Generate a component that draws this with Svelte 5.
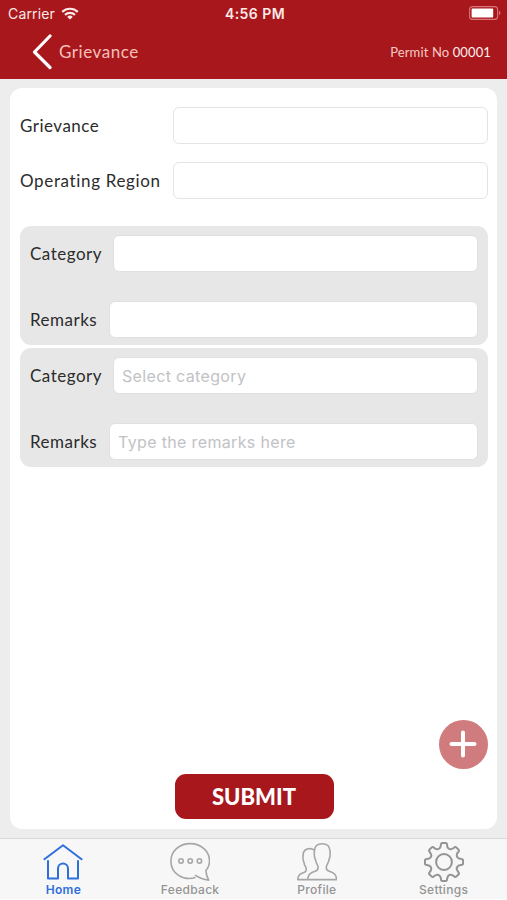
<!--
  Grievance entry screen: permit header, the two top-level fields, a list of
  category/remark groups and the tab bar.
-->
<script lang="ts">
  interface Entry {
    category: string
    remarks: string
    categoryHint: string
    remarksHint: string
  }

  const permitNo = '00001'

  let grievance = $state('')
  let region = $state('')
  let activeTab = $state('home')
  let entries = $state<Entry[]>([
    { category: '', remarks: '', categoryHint: '', remarksHint: '' },
    {
      category: '',
      remarks: '',
      categoryHint: 'Select category',
      remarksHint: 'Type the remarks here',
    },
  ])

  const tabs = [
    { id: 'home', label: 'Home' },
    { id: 'feedback', label: 'Feedback' },
    { id: 'profile', label: 'Profile' },
    { id: 'settings', label: 'Settings' },
  ]

  function addEntry() {
    entries.push({
      category: '',
      remarks: '',
      categoryHint: 'Select category',
      remarksHint: 'Type the remarks here',
    })
  }

  // Eight-tooth cog outline around (20, 20)
  function cogPath() {
    const at = (radius: number, degrees: number) => {
      const a = (degrees * Math.PI) / 180
      return `${(20 + radius * Math.cos(a)).toFixed(2)} ${(20 + radius * Math.sin(a)).toFixed(2)}`
    }
    let d = ''
    for (let i = 0; i < 8; i++) {
      const c = i * 45 - 90
      d += `${i ? 'L' : 'M'}${at(17.4, c - 10)}Q${at(19.3, c - 9)} ${at(19.1, c - 4)}`
      d += `L${at(19.1, c + 4)}Q${at(19.3, c + 9)} ${at(17.4, c + 10)}`
      d += `C${at(14.4, c + 12)} ${at(12.9, c + 26)} ${at(15.6, c + 32)}`
    }
    return d + 'Z'
  }
</script>

<div class="screen">
  <header>
    <div class="status">
      <div class="carrier">
        <span>Carrier</span>
        <svg width="18" height="13" viewBox="0 0 18 13" fill="none" stroke="currentColor" stroke-width="2.2">
          <path d="M1.2 4.9a11.2 11.2 0 0 1 15.6 0" />
          <path d="M4 7.9a7.2 7.2 0 0 1 10 0" />
          <path d="M9 12.6 6.2 9.9a4.1 4.1 0 0 1 5.6 0z" fill="currentColor" stroke="none" />
        </svg>
      </div>
      <span class="time">4:56 PM</span>
      <svg class="battery" width="32" height="14" viewBox="0 0 32 14">
        <rect x=".6" y=".6" width="28" height="12.8" rx="3" fill="none" stroke="#d9747a" stroke-width="1.1" />
        <rect x="2.6" y="2.5" width="21.6" height="9" rx="1" fill="#fff" />
        <path d="M30 4.800a2.400 2.400 0 0 1 0 4.400z" fill="#d9747a" />
      </svg>
    </div>
    <div class="nav">
      <button class="back" type="button">
        <svg width="20" height="36" viewBox="0 0 20 36" fill="none" stroke="#fff" stroke-width="3.2" stroke-linecap="round" stroke-linejoin="round">
          <path d="M18 2 2.5 18 18 33.5" />
        </svg>
        <span>Grievance</span>
      </button>
      <span class="permit">Permit No <b>{permitNo}</b></span>
    </div>
  </header>

  <main>
    <form class="card" onsubmit={(event) => event.preventDefault()}>
      <label class="row">
        <span class="label grievance">Grievance</span>
        <input bind:value={grievance} />
      </label>
      <label class="row">
        <span class="label region">Operating Region</span>
        <input bind:value={region} />
      </label>

      <div class="entries">
        {#each entries as entry}
          <div class="entry">
            <label>
              <span class="label category">Category</span>
              <input placeholder={entry.categoryHint} bind:value={entry.category} />
            </label>
            <label>
              <span class="label remarks">Remarks</span>
              <input placeholder={entry.remarksHint} bind:value={entry.remarks} />
            </label>
          </div>
        {/each}
      </div>

      <button class="add" type="button" aria-label="Add" onclick={addEntry}>
        <svg width="29" height="29" viewBox="0 0 29 29" stroke="#fff" stroke-width="4" stroke-linecap="round">
          <path d="M14 2.500v23M2.500 14h23" />
        </svg>
      </button>
      <button class="submit" type="submit">SUBMIT</button>
    </form>
  </main>

  <nav class="tabs">
    {#each tabs as tab}
      <button
        class="tab {tab.id}"
        class:active={activeTab === tab.id}
        type="button"
        onclick={() => (activeTab = tab.id)}
      >
        <svg width="40" height="40" viewBox="0 0 40 40" fill="none" stroke="currentColor" stroke-width="1.6" stroke-linejoin="round">
          {#if tab.id === 'home'}
            <g stroke-width="2" stroke-linecap="round">
              <path d="M1.400 17.200 20 3.200l18.600 14" />
              <path d="M5 19v17.500h10V26.500a5 5 0 0 1 10 0v10h10V19" />
            </g>
          {:else if tab.id === 'feedback'}
            <path d="M25.500 35.600C13 39.200.9 31.400.9 19.200.9 9 9.300 1.600 20.200 1.600S39.500 9 39.500 19c0 3.700-1.300 6.800-3.600 9.600.2 3.500 1 6.400 2.800 9.500-5-.5-9.600-2.300-13.700-5" />
            <circle cx="11" cy="19" r="2.200" />
            <circle cx="20.200" cy="19" r="2.200" />
            <circle cx="29.400" cy="19" r="2.200" />
          {:else if tab.id === 'profile'}
            <path d="M10.800 37.600C11 33.500 12 31.700 15 30.500l3.600-1.400c2-.8 2.500-1.800 2.500-3.700 0-2-.8-2.700-1.800-4.700-.7-1.500-.6-3-1.400-4.500-1-2-.6-4.500-.5-7.200.2-4.500 3-7.200 7.800-7.200S32.800 4.500 33 9c.1 2.700.5 5.200-.5 7.200-.8 1.500-.7 3-1.400 4.500-1 2-1.800 2.700-1.800 4.700 0 1.900.5 2.900 2.500 3.700l3.600 1.400c3 1.200 4 3 4.200 7.100z" />
            <path d="M17.300 8.100C16 7 14.600 6.600 13 6.600c-4.300 0-6.700 2.300-6.900 6.300-.1 2.300-.5 4.500.4 6.200.7 1.400.6 2.600 1.200 4 .9 1.700 1.600 2.400 1.600 4.100 0 1.600-.5 2.500-2.200 3.200l-2.800 1.100c-2.500 1-3.300 2.600-3.500 6.100h10" />
          {:else}
            <path d={cogPath()} stroke-width="2" />
            <circle cx="20" cy="20" r="7.900" stroke-width="2" />
          {/if}
        </svg>
        <span>{tab.label}</span>
      </button>
    {/each}
  </nav>
</div>

<style>
  :global(body) {
    margin: 0;
    background: #fff;
  }

  .screen {
    display: flex;
    flex-direction: column;
    height: 899px;
    background: #ededed;
    font-family: Lato, 'Open Sans', sans-serif;
    color: #2c2c2c;
  }

  button {
    padding: 0;
    border: 0;
    background: none;
    color: inherit;
    font: inherit;
    cursor: pointer;
  }

  svg {
    display: block;
    flex: none;
  }

  header {
    box-sizing: border-box;
    height: 79px;
    background: #a8171c;
    color: #fbe9e6;
  }

  .status {
    display: grid;
    grid-template-columns: 1fr auto 1fr;
    align-items: center;
    height: 27px;
    padding: 0 6px 0 8px;
    font-family: Inter, 'Liberation Sans', sans-serif;
    font-size: 14px;
  }

  .carrier {
    display: flex;
    align-items: center;
    gap: 6px;
    letter-spacing: 0.15px;
  }

  .time {
    margin-left: 1px;
    font-weight: 600;
    letter-spacing: 0.45px;
  }

  .battery {
    justify-self: end;
    position: relative;
    top: -1px;
  }

  .nav {
    display: flex;
    align-items: center;
    justify-content: space-between;
    height: 49px;
    padding: 0 16px 0 32px;
  }

  .back {
    display: flex;
    align-items: center;
    gap: 7px;
    font-size: 17px;
    letter-spacing: 0.55px;
    color: #f6c0ba;
  }

  .permit {
    font-size: 13px;
    letter-spacing: 0.12px;
    color: #f6c9c4;
  }

  .permit b {
    font-weight: 400;
    color: #fff0ee;
  }

  main {
    flex: 1;
    display: flex;
    padding: 9px 10px;
  }

  .card {
    position: relative;
    flex: 1;
    display: flex;
    flex-direction: column;
    padding: 19px 9px 10px 10px;
    border-radius: 12px;
    background: #fff;
  }

  .row {
    display: grid;
    grid-template-columns: 153px 1fr;
    align-items: center;
    margin-bottom: 18px;
  }

  .label {
    font-size: 17px;
    letter-spacing: 0.5px;
    white-space: nowrap;
  }

  .region {
    letter-spacing: 0.65px;
  }

  input {
    box-sizing: border-box;
    min-width: 0;
    height: 37px;
    padding: 0 8px;
    border: 1px solid #e4e4e4;
    border-radius: 6px;
    outline: none;
    background: #fff;
    font-family: Inter, 'Liberation Sans', sans-serif;
    font-size: 16px;
    letter-spacing: 0.35px;
    color: inherit;
  }

  input::placeholder {
    color: #c2c2c6;
    opacity: 1;
  }

  .entries {
    display: flex;
    flex-direction: column;
    gap: 3px;
    margin-top: 9px;
  }

  .entry {
    box-sizing: border-box;
    display: flex;
    flex-direction: column;
    justify-content: space-between;
    height: 119px;
    padding: 9px 10px 7px;
    border-radius: 11px;
    background: #e7e7e7;
  }

  .entry label {
    display: flex;
    align-items: center;
  }

  .entry input {
    flex: 1;
    border-color: #e0e0e0;
  }

  .category {
    width: 83px;
  }

  .remarks {
    width: 79px;
  }

  .add {
    position: absolute;
    right: 9px;
    bottom: 60px;
    display: grid;
    place-items: center;
    width: 49px;
    height: 49px;
    border-radius: 50%;
    background: #d07b7d;
  }

  .submit {
    align-self: center;
    width: 159px;
    height: 45px;
    margin-top: auto;
    border-radius: 11px;
    background: #a8171c;
    font-size: 22px;
    font-weight: 900;
    color: #fff;
  }

  .tabs {
    box-sizing: border-box;
    display: grid;
    grid-template-columns: repeat(4, 1fr);
    height: 61px;
    border-top: 1px solid #d9d9d9;
    background: #f7f7f7;
  }

  .tab {
    display: flex;
    flex-direction: column;
    align-items: center;
    padding-top: 3px;
    font-family: Inter, 'Liberation Sans', sans-serif;
    font-size: 12px;
    font-weight: 500;
    line-height: 16px;
    letter-spacing: 0.3px;
    color: #949494;
  }

  .profile svg,
  .feedback svg {
    color: #a6a6a6;
  }

  .tab.active,
  .tab.active svg {
    color: #2f6fdc;
  }

  .active {
    font-weight: 600;
  }
</style>
